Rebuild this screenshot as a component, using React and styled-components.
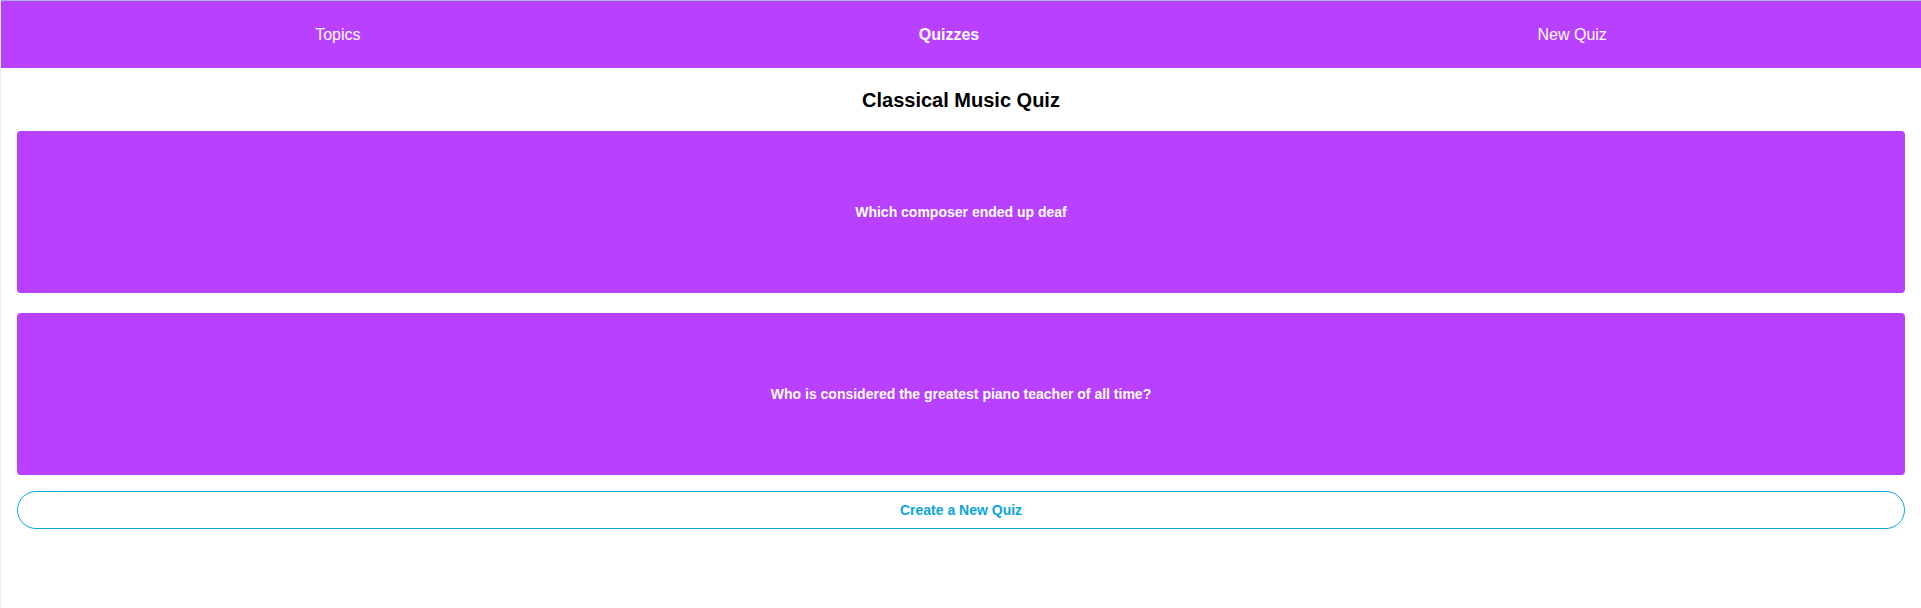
import React from 'react'
import styled, { createGlobalStyle } from 'styled-components'

const GlobalStyle = createGlobalStyle`
  body {
    margin: 0;
    background: #ffffff;
    font-family: 'Liberation Sans', Arial, Helvetica, sans-serif;
  }
`

const purple = '#b840fe'
const blue = '#0ba6d9'

const Page = styled.div`
  min-height: 607px;
  border-top: 1px solid #a7b6d8;
  border-left: 1px solid #ececec;
  box-sizing: border-box;
`

const NavBar = styled.nav`
  height: 67px;
  background: ${purple};
  display: flex;
  justify-content: space-around;
  align-items: center;
  padding: 0 35px 0 35px;
`

const NavLink = styled.a`
  color: #ffffff;
  font-size: 16px;
  font-weight: ${props => (props.active ? 'bold' : 'normal')};
  text-decoration: none;
  cursor: pointer;
`

const Main = styled.main`
  padding: 0 16px;
  display: flex;
  flex-direction: column;
`

const Title = styled.h2`
  margin: 20px 0 19px;
  font-size: 20px;
  line-height: 24px;
  font-weight: bold;
  text-align: center;
  color: #000000;
`

const CardList = styled.ul`
  list-style: none;
  margin: 0;
  padding: 0;
  display: flex;
  flex-direction: column;
  gap: 20px;
`

const Card = styled.li`
  height: 162px;
  background: ${purple};
  border-radius: 4px;
  display: flex;
  align-items: center;
  justify-content: center;
  color: #ffffff;
  font-size: 14px;
  font-weight: bold;
`

const CreateButton = styled.button`
  margin-top: 16px;
  height: 38px;
  width: 100%;
  background: #ffffff;
  border: 1px solid ${blue};
  border-radius: 20px;
  color: ${blue};
  font-family: inherit;
  font-size: 14px;
  font-weight: bold;
  cursor: pointer;
`

const questions = [
  { id: 1, front: 'Which composer ended up deaf' },
  { id: 2, front: 'Who is considered the greatest piano teacher of all time?' },
]

export default function App() {
  return (
    <>
      <GlobalStyle />
      <Page>
        <NavBar>
          <NavLink>Topics</NavLink>
          <NavLink active>Quizzes</NavLink>
          <NavLink>New Quiz</NavLink>
        </NavBar>
        <Main>
          <Title>Classical Music Quiz</Title>
          <CardList>
            {questions.map(q => (
              <Card key={q.id}>{q.front}</Card>
            ))}
          </CardList>
          <CreateButton>Create a New Quiz</CreateButton>
        </Main>
      </Page>
    </>
  )
}
